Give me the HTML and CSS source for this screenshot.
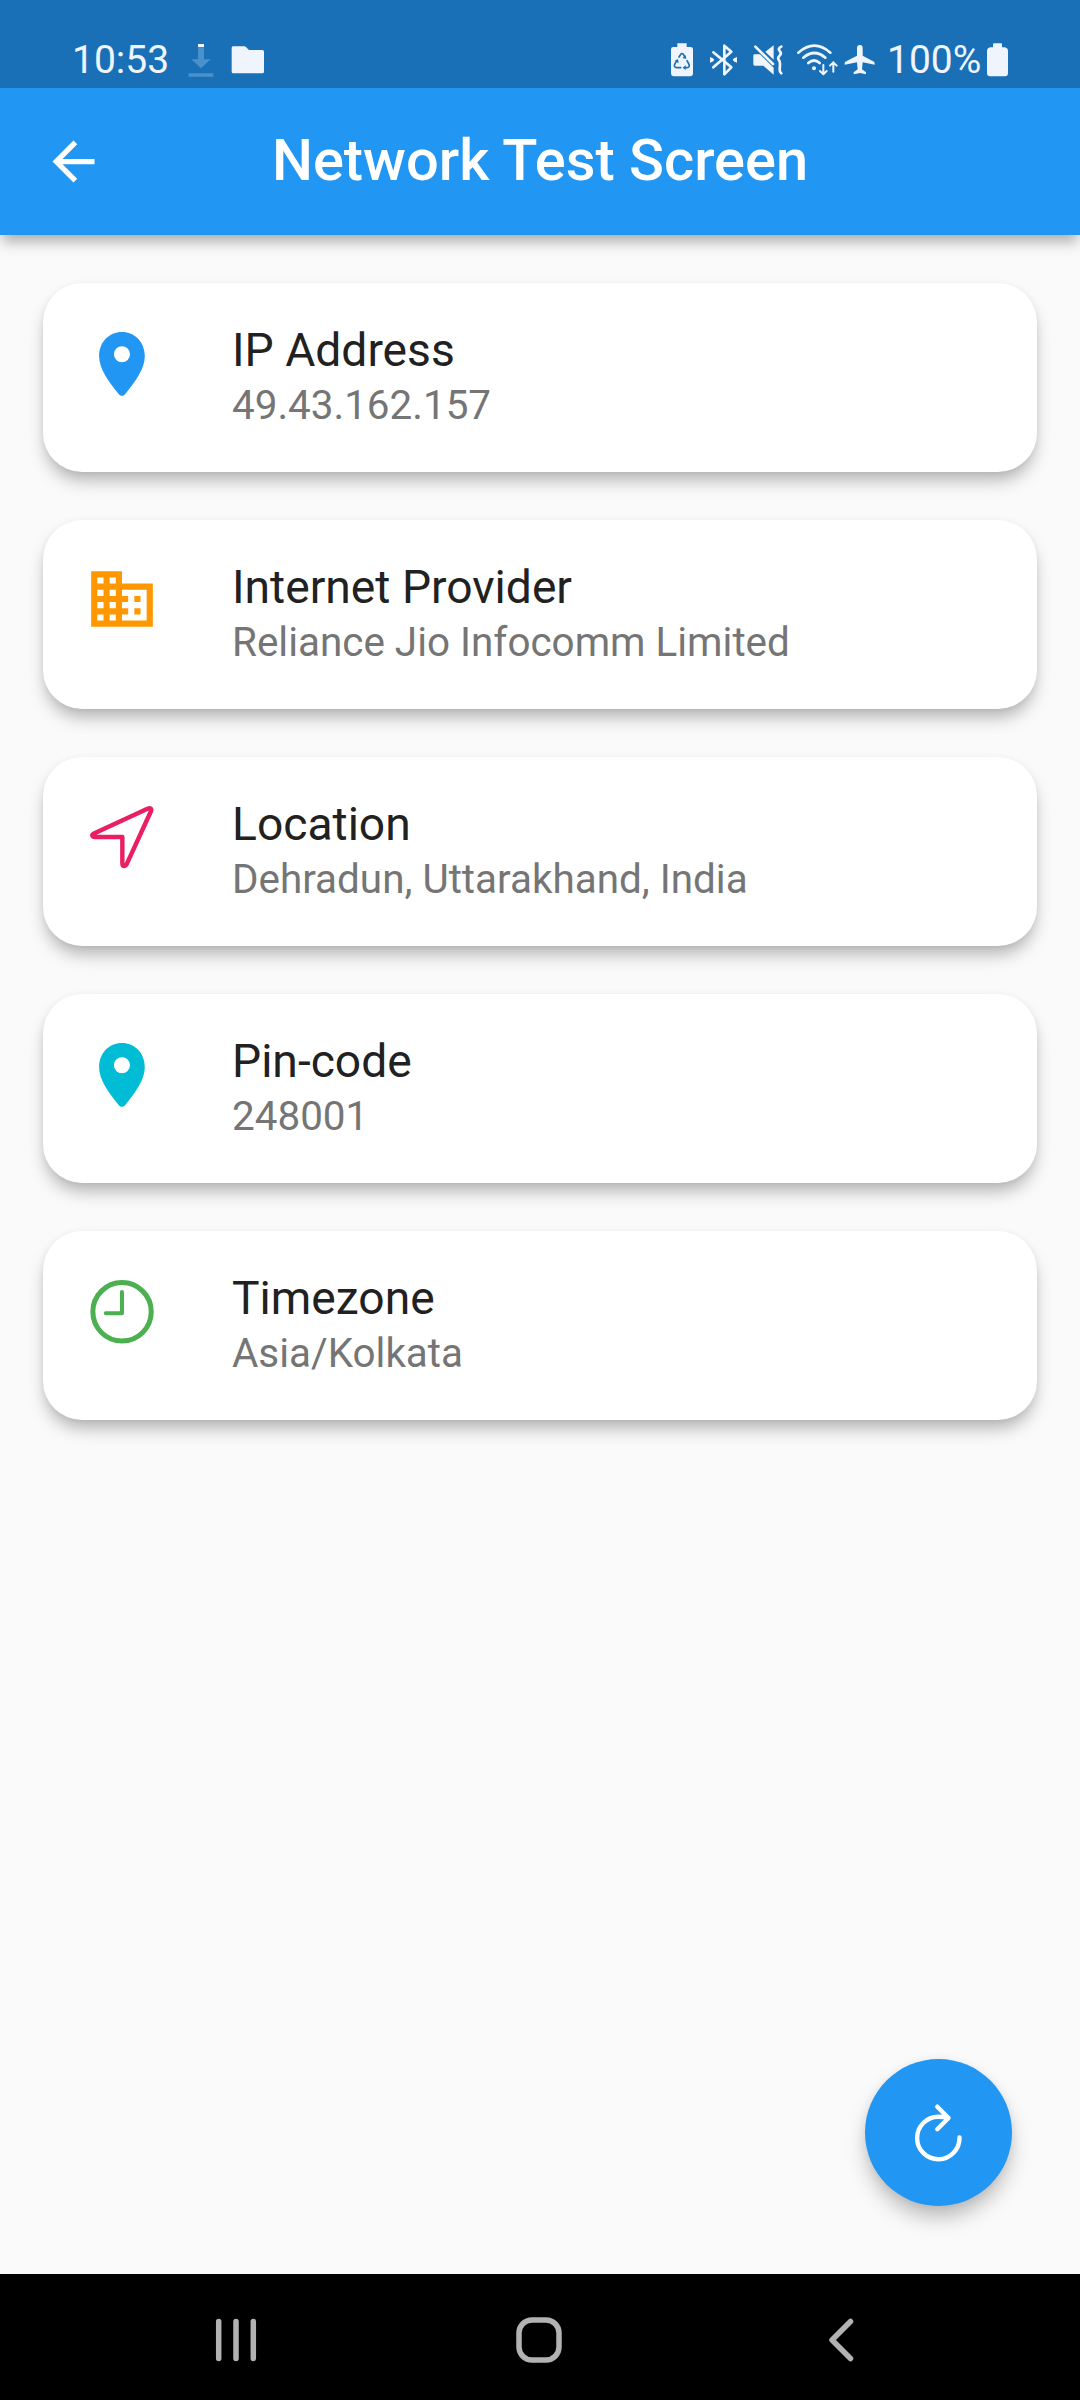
FILE: index.html
```html
<!DOCTYPE html>
<html lang="en">
<head>
<meta charset="utf-8">
<title>Network Test Screen</title>
<link rel="stylesheet" href="styles.css">
</head>
<body>
<div class="screen">
  <div class="status-bar">
    <span class="clock">10:53</span>
    <svg class="download" width="26" height="36" viewBox="0 0 78 108">
      <path class="faint" d="M30 16h18v36h20L39 79 10 52h20zM2 94h74v10H2z"/>
      <path d="M30 6h18v9H30z"/>
    </svg>
    <svg class="folder" width="34" height="36" viewBox="0 0 102 108">
      <path d="M6 13h34q3 0 5 2l9 9h40q5 0 5 5v60q0 5-5 5H7q-5 0-5-5V18q0-5 4-5z"/>
    </svg>
    <div class="indicators">
      <svg class="recycle" width="24" height="36" viewBox="60 68 72 108">
        <path d="M82 72h28v11h12q7 0 7 7v72q0 9-9 9H72q-9 0-9-9V90q0-7 7-7h12z"/>
        <g class="cut"><path d="M87 113l5-8q4-5 8 0l5 8M111 124l6 11q3 9-6 10h-7M92 145h-12q-9-1-6-10l6-11"/></g>
        <path class="cutfill" d="M109 119l-12-3 10-8zM98 145l9-7v14zM84 119l2 13-12-7z"/>
      </svg>
      <svg class="bluetooth" width="30" height="36" viewBox="177 68 90 108">
        <path class="line" d="M190 99l54 45-21 21V79l21 18-54 47"/>
        <path d="M180 113q11 3 13 8-2 6-13 9zM261 113q-11 3-13 8 2 6 13 9z"/>
      </svg>
      <svg class="mute" width="32" height="36" viewBox="306 68 96 108">
        <path d="M346 97l25-19v43zM314 105h16l41 40v21l-31-27h-26q-4 0-4-4v-26q0-4 4-4z"/>
        <path class="line" d="M316 82l53 52"/>
        <path class="line" d="M394 82q-12 6-5 13t0 14-3 12 4 13-1 15 5 13"/>
      </svg>
      <svg class="wifi" width="43" height="36" viewBox="437 68 129 108">
        <g class="line"><path d="M444 100q48-42 96 0M459 115q33-28 66 0M474 131q17-15 34 0"/></g>
        <circle cx="491" cy="147" r="6"/>
        <g class="thin"><path d="M519 137v28m-10-10l10 10 10-10M549 157v-28m-10 10l10-10 10 10"/></g>
      </svg>
      <svg class="plane" width="32" height="36" viewBox="582 68 96 108">
        <path d="M630 77q8 0 8 10v22l34 18q3 3 2 9l-36-7-2 21 12 9v6l-18-4-19 4v-6l12-9-2-21-37 7q-1-6 2-9l35-18V87q0-10 9-10z"/>
      </svg>
      <span class="percent">100%</span>
      <svg class="battery" width="24" height="36" viewBox="1008 68 72 108">
        <path d="M1029 75q0-3 3-3h21q3 0 3 3v9h8q10 2 10 11v67q0 9-9 9h-45q-9 0-9-9V95q0-9 10-11h8z"/>
      </svg>
    </div>
  </div>

  <header class="app-bar">
    <svg class="back" width="63" height="63" viewBox="0 0 24 24"><path d="M20 11H7.83l5.59-5.59L12 4l-8 8 8 8 1.41-1.41L7.83 13H20v-2z"/></svg>
    <h1>Network Test Screen</h1>
  </header>

  <main class="list">
    <section class="card">
      <svg class="icon blue" viewBox="0 0 73.5 73.5"><path fill-rule="evenodd" d="M36.7 7C24 7 14 17 14 31c0 12.5 9.5 25.5 19.6 37.700 1.900 2.200 4.300 2.200 6.200 0C49.900 56.500 59.400 43.500 59.400 31 59.400 17 49.400 7 36.700 7zm0 14a8 8 0 1 1 0 16 8 8 0 0 1 0-16z"/></svg>
      <div><h2>IP Address</h2><p>49.43.162.157</p></div>
    </section>
    <section class="card">
      <svg class="icon orange" viewBox="0 0 24 24"><path d="M12 7V3H2v18h20V7H12zM6 19H4v-2h2v2zm0-4H4v-2h2v2zm0-4H4V9h2v2zm0-4H4V5h2v2zm4 12H8v-2h2v2zm0-4H8v-2h2v2zm0-4H8V9h2v2zm0-4H8V5h2v2zm10 12h-8v-2h2v-2h-2v-2h2v-2h-2V9h8v10zm-2-8h-2v2h2v-2zm0 4h-2v2h2v-2z"/></svg>
      <div><h2>Internet Provider</h2><p>Reliance Jio Infocomm Limited</p></div>
    </section>
    <section class="card">
      <svg class="icon pink" viewBox="0 0 73.5 73.5"><path d="M8.900 34.300L62.600 9.400c2.200-.900 3.900.600 2.900 2.800L41.300 65c-1.200 2.500-4.200 2-4.200-1V37.700H10c-3.200 0-3.600-2.300-1.100-3.400z"/></svg>
      <div><h2>Location</h2><p>Dehradun, Uttarakhand, India</p></div>
    </section>
    <section class="card">
      <svg class="icon cyan" viewBox="0 0 73.5 73.5"><path fill-rule="evenodd" d="M36.7 7C24 7 14 17 14 31c0 12.500 9.500 25.500 19.600 37.700 1.900 2.200 4.300 2.200 6.200 0C49.900 56.500 59.400 43.500 59.400 31 59.400 17 49.400 7 36.700 7zm0 14a8 8 0 1 1 0 16 8 8 0 0 1 0-16z"/></svg>
      <div><h2>Pin-code</h2><p>248001</p></div>
    </section>
    <section class="card">
      <svg class="icon green" viewBox="0 0 73.5 73.5"><circle cx="36.800" cy="38.500" r="29"/><path d="M36.700 19v21H20.700"/></svg>
      <div><h2>Timezone</h2><p>Asia/Kolkata</p></div>
    </section>
    <button class="fab" aria-label="Refresh">
      <svg width="147" height="147" viewBox="0 0 147 147"><path d="M94.500 78.500A21.200 21.200 0 1 1 73.300 57.800Q79 57.800 83.500 59M72.300 47.700L83.500 59 72.300 70.200"/></svg>
    </button>
  </main>

  <nav class="nav-bar">
    <svg width="44" height="50" viewBox="0 0 44 50"><path d="M4.700 6.500v37M22 6.500v37M39.300 6.500v37"/></svg>
    <svg width="50" height="50" viewBox="0 0 50 50"><rect x="5" y="5" width="40" height="40" rx="13"/></svg>
    <svg width="34" height="50" viewBox="0 0 34 50"><path d="M26.500 6.500L8 25l18.500 18.500"/></svg>
  </nav>
</div>
</body>
</html>
```
FILE: styles.css
```css
* { box-sizing: border-box; }
body { margin: 0; font-family: Roboto, sans-serif; }
h1, h2, p { margin: 0; font-weight: 400; white-space: nowrap; }
svg { display: block; flex: none; }

.screen {
  width: 1080px;
  height: 2400px;
  display: flex;
  flex-direction: column;
  background: #fafafa;
}

.status-bar {
  height: 88px;
  padding: 42px 70px 0 72px;
  display: flex;
  background: #1a70b6;
  color: #eff4fd;
  fill: #eff4fd;
  z-index: 2;
}
.clock, .percent { font-size: 39px; line-height: 36px; }
.clock { width: 98px; }
.faint { fill: #4a90cb; }
.download { margin-left: 18px; }
.folder { margin-left: 17px; }
.indicators { margin-left: auto; display: flex; }
.bluetooth { margin-left: 15px; }
.mute { margin-left: 13px; }
.wifi { margin-left: 12px; }
.plane { margin-left: 5px; }
.percent { width: 98px; margin-left: 11px; }
.battery { margin-left: 1px; }
.line, .thin, .cut path { fill: none; stroke: #eff4fd; stroke-width: 8; stroke-linecap: round; stroke-linejoin: round; }
.thin { stroke-width: 6; }
.cut path { stroke: #1a70b6; stroke-width: 5; }
.cutfill { fill: #1a70b6; }

.app-bar {
  height: 147px;
  flex: none;
  display: grid;
  grid-template-columns: 147px 1fr 147px;
  align-items: center;
  background: #2196f3;
  color: #fff;
  fill: #fff;
  box-shadow: 0 9px 13px -2px rgba(0, 0, 0, .3);
  z-index: 1;
}
.back { justify-self: center; }
.app-bar h1 { padding-bottom: 3px; font-size: 57.750px; font-weight: 500; line-height: 68px; text-align: center; }

.list {
  position: relative;
  flex: 1;
  padding: 48px 43px 0;
  display: flex;
  flex-direction: column;
  gap: 48px;
}
.card {
  height: 189px;
  padding: 37px 42px 0;
  display: flex;
  gap: 73px;
  background: #fff;
  border-radius: 39px;
  box-shadow: 0 11px 17px -3px rgba(0, 0, 0, .29), 0 1px 6px rgba(0, 0, 0, .05);
}
.icon { width: 74px; height: 74px; margin-top: 5px; }
.blue { fill: #2196f3; }
.orange { fill: #ff9800; }
.cyan { fill: #00bcd4; }
.pink { fill: none; stroke: #e91e63; stroke-width: 4.400; stroke-linejoin: round; }
.green { fill: none; stroke: #4caf50; stroke-width: 4; stroke-linecap: round; stroke-linejoin: round; }
.green circle { stroke-width: 5; }
.card h2 { font-size: 46.200px; line-height: 60px; color: #212121; }
.card p { padding-top: 1px; font-size: 40.425px; line-height: 50px; color: #757575; }

.fab {
  position: absolute;
  right: 68px;
  bottom: 68px;
  width: 147px;
  height: 147px;
  padding: 0;
  border: 0;
  border-radius: 50%;
  background: #2196f3;
  box-shadow: 0 13px 22px -3px rgba(0, 0, 0, .28), 0 1px 8px rgba(0, 0, 0, .06);
}
.fab path { fill: none; stroke: #fff; stroke-width: 4.400; stroke-linecap: round; stroke-linejoin: round; }

.nav-bar {
  height: 126px;
  padding: 6px 222px 0 214px;
  display: flex;
  align-items: center;
  justify-content: space-between;
  background: #000;
}
.nav-bar svg { fill: none; stroke: #b2b2b2; stroke-width: 5.500; stroke-linecap: round; stroke-linejoin: round; }
.nav-bar svg:nth-child(2) { margin-right: 5px; }
```
